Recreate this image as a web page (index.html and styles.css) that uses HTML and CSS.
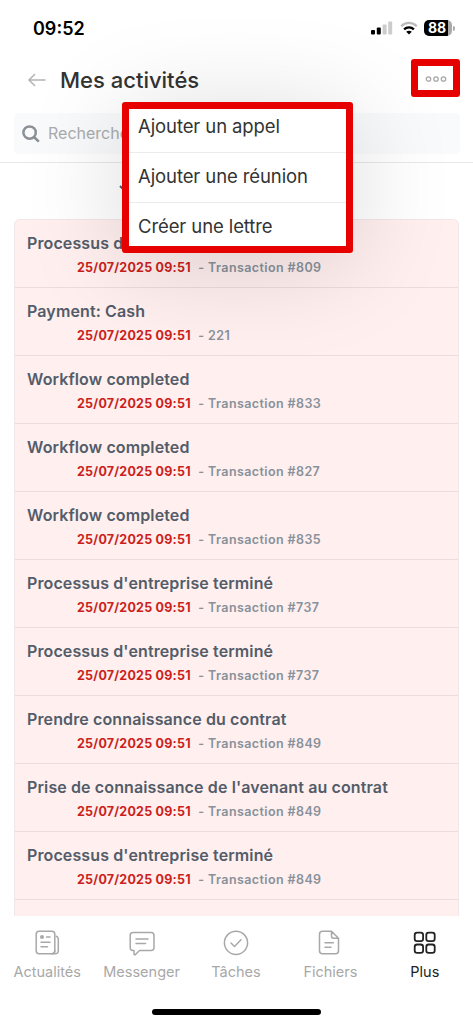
FILE: index.html
```html
<!DOCTYPE html>
<html lang="fr">
<head>
    <meta charset="UTF-8">
    <meta name="viewport" content="width=device-width, initial-scale=1.0">
    <title>Mes activités</title>
    <link rel="stylesheet" href="styles.css">
</head>
<body>
    <div class="app">
        <!-- Status Bar -->
        <div class="status-bar">
            <span class="time">09:52</span>
            <div class="status-icons">
                <svg class="signal" width="22" height="14" viewBox="0 0 22 14">
                    <rect x="0" y="9" width="4" height="4.5" rx="1" fill="#000"/>
                    <rect x="5.8" y="6.5" width="4" height="7" rx="1" fill="#000"/>
                    <rect x="11.6" y="3.5" width="4" height="10" rx="1" fill="#ccc"/>
                    <rect x="17.2" y="0.5" width="4" height="13" rx="1" fill="#ccc"/>
                </svg>
                <svg class="wifi" width="18" height="14" viewBox="0 0 18 14" fill="none">
                    <path d="M1.2 5.2C5.6 0.8 12.4 0.8 16.8 5.2" stroke="#bbb" stroke-width="2.3"/>
                    <path d="M4.1 8.4C6.9 5.7 11.1 5.7 13.9 8.4" stroke="#000" stroke-width="2.4"/>
                    <path d="M9 13.6L6.2 10.8C7.8 9.4 10.2 9.4 11.8 10.8Z" fill="#000"/>
                </svg>
                <div class="battery"><span>88</span></div>
            </div>
        </div>

        <!-- Header -->
        <div class="header">
            <svg class="back" width="18" height="14" viewBox="0 0 18 14" fill="none" stroke="#b3b3b3" stroke-width="1.5">
                <path d="M17.5 7H1M7 1L1 7L7 13"/>
            </svg>
            <h1>Mes activités</h1>
            <button class="more highlight">
                <svg width="22" height="8" viewBox="0 0 22 8" fill="none" stroke="#a8a8a8" stroke-width="1.3">
                    <circle cx="3.5" cy="4" r="2.2"/>
                    <circle cx="11" cy="4" r="2.2"/>
                    <circle cx="18.5" cy="4" r="2.2"/>
                </svg>
            </button>
        </div>

        <!-- Search -->
        <div class="search">
            <div class="search-box">
                <svg width="18" height="18" viewBox="0 0 18 18" fill="none" stroke="#8a9095" stroke-width="2.5">
                    <circle cx="7.6" cy="7.6" r="6.2"/>
                    <path d="M12 12L16.8 16.6"/>
                </svg>
                <span>Recherche</span>
            </div>
        </div>

        <!-- Filter -->
        <div class="filter">
            <svg width="12" height="9" viewBox="0 0 12 9" fill="none" stroke="#3b6285" stroke-width="2">
                <path d="M1 1L4.5 4.5L10 1"/>
            </svg>
        </div>

        <!-- Activities -->
        <ul class="activities">
            <li>
                <h2>Processus d'</h2>
                <p><b>25/07/2025 09:51</b> <i>-</i> Transaction #809</p>
            </li>
            <li>
                <h2>Payment: Cash</h2>
                <p><b>25/07/2025 09:51</b> <i>-</i> 221</p>
            </li>
            <li>
                <h2>Workflow completed</h2>
                <p><b>25/07/2025 09:51</b> <i>-</i> Transaction #833</p>
            </li>
            <li>
                <h2>Workflow completed</h2>
                <p><b>25/07/2025 09:51</b> <i>-</i> Transaction #827</p>
            </li>
            <li>
                <h2>Workflow completed</h2>
                <p><b>25/07/2025 09:51</b> <i>-</i> Transaction #835</p>
            </li>
            <li>
                <h2>Processus d'entreprise terminé</h2>
                <p><b>25/07/2025 09:51</b> <i>-</i> Transaction #737</p>
            </li>
            <li>
                <h2>Processus d'entreprise terminé</h2>
                <p><b>25/07/2025 09:51</b> <i>-</i> Transaction #737</p>
            </li>
            <li>
                <h2>Prendre connaissance du contrat</h2>
                <p><b>25/07/2025 09:51</b> <i>-</i> Transaction #849</p>
            </li>
            <li>
                <h2>Prise de connaissance de l'avenant au contrat</h2>
                <p><b>25/07/2025 09:51</b> <i>-</i> Transaction #849</p>
            </li>
            <li>
                <h2>Processus d'entreprise terminé</h2>
                <p><b>25/07/2025 09:51</b> <i>-</i> Transaction #849</p>
            </li>
            <li></li>
        </ul>

        <!-- Tab Bar -->
        <nav class="tab-bar">
            <a class="tab">
                <svg width="26" height="26" viewBox="0 0 26 26" fill="none" stroke="currentColor" stroke-width="1.5" stroke-linecap="round">
                    <rect x="2.2" y="1.2" width="18.6" height="22.6" rx="3"/>
                    <path d="M22.3 6.2Q24.3 6.8 24.3 9V20.5Q24.3 23.8 21 23.8H17.5Q20.8 23.8 20.8 20.5M12.5 7H16M7 12.3H16M7 16.7H13.5"/>
                    <circle cx="8" cy="7" r="2" fill="currentColor" stroke="none"/>
                </svg>
                <span>Actualités</span>
            </a>
            <a class="tab">
                <svg width="26" height="26" viewBox="0 0 26 26" fill="none" stroke="currentColor" stroke-width="1.5" stroke-linecap="round" stroke-linejoin="round">
                    <path d="M4 2.5H22Q25 2.5 25 5.5V17.5Q25 20.5 22 20.5H10.5L6.5 24.5Q5.2 25.3 5 23.8V20.5H4Q1.2 20.5 1.2 17.5V5.5Q1.2 2.5 4 2.5ZM7 9H19M7 13.5H16.5"/>
                </svg>
                <span>Messenger</span>
            </a>
            <a class="tab">
                <svg width="26" height="26" viewBox="0 0 26 26" fill="none" stroke="currentColor" stroke-width="1.5" stroke-linecap="round" stroke-linejoin="round">
                    <circle cx="13" cy="12.8" r="11.6"/>
                    <path d="M8 13L11.5 16.5L18 9.8"/>
                </svg>
                <span>Tâches</span>
            </a>
            <a class="tab">
                <svg width="26" height="26" viewBox="0 0 26 26" fill="none" stroke="currentColor" stroke-width="1.5" stroke-linecap="round" stroke-linejoin="round">
                    <path d="M5.5 1.2H14.5L21.5 8.2V20.8Q21.5 23.8 18.5 23.8H5.5Q2.5 23.8 2.5 20.8V4.2Q2.5 1.2 5.5 1.2ZM14.5 1.2V6Q14.5 8.2 16.5 8.2H21.5M8 12.7H16.3M8 17.2H14"/>
                </svg>
                <span>Fichiers</span>
            </a>
            <a class="tab active">
                <svg width="26" height="26" viewBox="0 0 26 26" fill="none" stroke="currentColor" stroke-width="1.8">
                    <rect x="2.7" y="2.7" width="8.4" height="8.4" rx="2.4"/>
                    <rect x="14.3" y="2.7" width="8.4" height="8.4" rx="2.4"/>
                    <rect x="2.7" y="14.5" width="8.4" height="8.4" rx="2.4"/>
                    <rect x="14.3" y="14.5" width="8.4" height="8.4" rx="2.4"/>
                </svg>
                <span>Plus</span>
            </a>
        </nav>
        <div class="home-indicator"></div>

        <!-- Dropdown Menu -->
        <div class="menu highlight">
            <a>Ajouter un appel</a>
            <a>Ajouter une réunion</a>
            <a>Créer une lettre</a>
        </div>
    </div>
</body>
</html>
```

FILE: styles.css
```css
/* General Styles */
* {
    margin: 0;
    padding: 0;
    box-sizing: border-box;
}

body {
    font-family: Inter, "Liberation Sans", sans-serif;
    background: #fff;
    color: #333;
}

.app {
    position: relative;
    display: flex;
    flex-direction: column;
    height: 1024px;
    overflow: hidden;
}

.highlight {
    border: 7px solid #e60000;
    border-radius: 3px;
}

/* Status Bar */
.status-bar {
    display: flex;
    justify-content: space-between;
    height: 59px;
    padding: 0 19px 0 33px;
}

.time {
    font-size: 18px;
    font-weight: 600;
    line-height: 57px;
    color: #000;
}

.status-icons {
    display: flex;
    align-items: center;
    gap: 6px;
    height: 56px;
}

.signal {
    margin-right: 1px;
}

.battery {
    position: relative;
    width: 28px;
    height: 16px;
    margin-right: 2px;
    border-radius: 5px;
    background: linear-gradient(90deg, #000 24px, #aaa 24px);
    color: #fff;
    font-size: 14px;
    font-weight: 700;
    line-height: 16px;
    padding-left: 4px;
}

.battery::after {
    content: "";
    position: absolute;
    right: -3px;
    top: 6px;
    width: 2px;
    height: 5px;
    border-radius: 0 2px 2px 0;
    background: #aaa;
}

/* Header */
.header {
    display: flex;
    align-items: center;
    height: 38px;
    padding: 0 13px 0 28px;
}

.header h1 {
    flex: 1;
    margin: 4px 0 0 14px;
    font-size: 22px;
    font-weight: 450;
    line-height: 28px;
}

.back {
    margin-top: 4px;
}

.more {
    display: flex;
    align-items: center;
    justify-content: center;
    width: 49px;
    height: 38px;
    background: #fff;
}

.more svg {
    margin-top: 2px;
}

/* Search */
.search {
    height: 66px;
    padding: 16px 13px 0 14px;
    border-bottom: 1px solid #e6e8ea;
}

.search-box {
    display: flex;
    align-items: center;
    gap: 8px;
    height: 41px;
    padding-left: 8px;
    border-radius: 5px;
    background: #f8fafb;
    color: #a9abad;
    font-size: 16px;
}

.search-box span {
    margin-top: -1px;
}

/* Filter */
.filter {
    height: 56px;
    padding: 15px 0 0 119px;
}

/* Activities */
.activities {
    flex: 1;
    margin: 0 14px;
    border: 1px solid #f3e6e8;
    border-bottom: none;
    border-radius: 6px 6px 0 0;
    background: #ffefee;
    list-style: none;
    overflow: hidden;
}

.activities li {
    height: 68px;
    padding: 13px 12px 0;
    border-bottom: 1px solid #ebdcdd;
}

.activities h2 {
    color: #535c69;
    font-size: 16px;
    font-weight: 600;
    letter-spacing: 0.12px;
    line-height: 20px;
}

.activities p {
    margin-top: 6px;
    padding-left: 50px;
    color: #88919b;
    font-size: 12.5px;
    font-weight: 600;
    letter-spacing: 0.4px;
    line-height: 17px;
    white-space: nowrap;
}

.activities b {
    color: #cb1f1c;
    font-weight: 700;
    letter-spacing: 0.22px;
}

.activities i {
    margin-left: 4px;
    font-style: normal;
}

/* Tab Bar */
.tab-bar {
    display: flex;
    height: 93px;
    padding-top: 14px;
    margin-right: 1px;
}

.tab {
    flex: 1;
    display: flex;
    flex-direction: column;
    align-items: center;
    gap: 6px;
    color: #a8a8a8;
    font-size: 14.5px;
    line-height: 20px;
}

.tab.active {
    color: #222;
}

.home-indicator {
    width: 169px;
    height: 6px;
    margin: 0 auto 9px;
    border-radius: 3px;
    background: #000;
}

/* Dropdown Menu */
.menu {
    position: absolute;
    left: 122px;
    top: 102px;
    width: 231px;
    height: 151px;
    background: #fff;
    box-shadow: 0 10px 100px rgba(0, 0, 0, 0.15);
}

.menu a {
    display: block;
    height: 50px;
    padding-left: 9px;
    border-bottom: 1px solid #ececec;
    font-size: 18.5px;
    letter-spacing: -0.1px;
    line-height: 46px;
}

.menu a:first-child {
    height: 44px;
    line-height: 34px;
}

.menu a:last-child {
    height: 43px;
    border-bottom: none;
}
```
